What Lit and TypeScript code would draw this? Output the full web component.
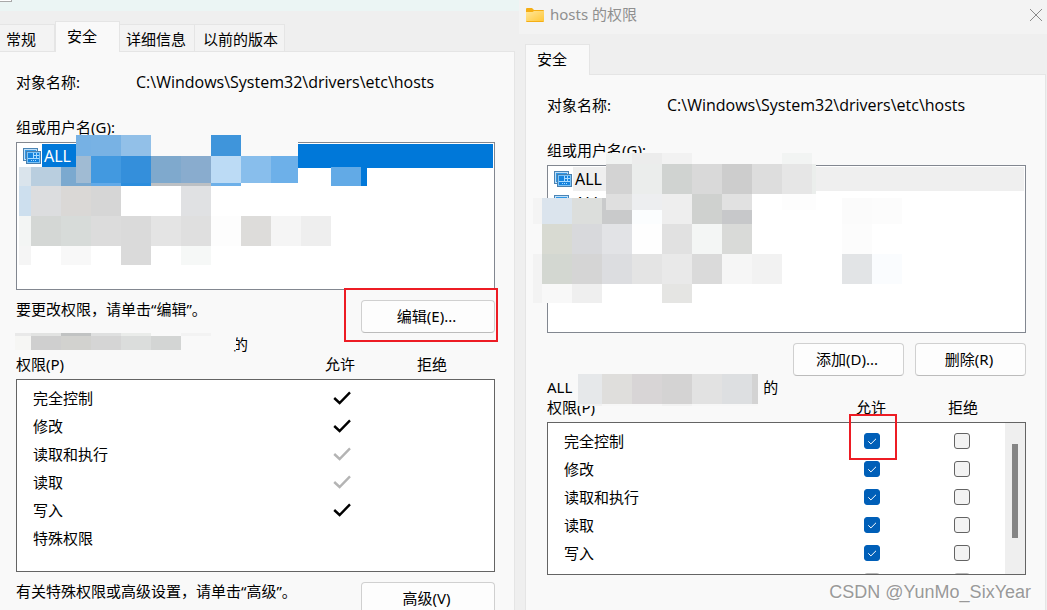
import { LitElement, html, svg, css, nothing } from "lit";
import { customElement, property, state } from "lit/decorators.js";
import { classMap } from "lit/directives/class-map.js";

type Tile = [x: number, y: number, w: number, h: number, fill: string];

/** One band of tiles sharing a top edge: [x, width, colour] triples. */
const band = (y: number, h: number, cells: [number, number, string][]): Tile[] =>
  cells.map(([x, w, c]) => [x, y, w, h, c] as Tile);

const FILE_LIST_TILES: Tile[] = [
  ...band(-7, 21, [[60, 15, "#76b1e4"], [75, 30, "#78b2e4"], [105, 30, "#92c0e8"], [135, 60, "#f9f9f9"], [195, 30, "#3f95db"], [225, 57, "#f9f9f9"]]),
  ...band(25, 19, [[3, 12, "#dae4ec"], [15, 30, "#b9cedf"], [45, 30, "#7ba9cf"], [75, 207, "#ffffff"], [315, 30, "#62aae6"], [345, 6, "#0078d9"]]),
  ...band(14, 27, [[60, 15, "#a0bbd3"], [75, 30, "#4299e0"], [105, 30, "#348fdb"], [135, 30, "#7fa9cd"], [165, 30, "#89acce"], [195, 30, "#bcdbf5"], [225, 30, "#88beec"], [255, 27, "#6db0e9"]]),
  ...band(41, 3, [[75, 30, "#62aae8"], [105, 30, "#2b8ddd"], [135, 60, "#bcc0c4"], [195, 30, "#6db0e9"]]),
  ...band(44, 30, [[3, 12, "#cddfee"], [15, 30, "#dcdddf"], [45, 30, "#dad8d6"], [75, 30, "#d6d6d6"], [165, 30, "#e0e1e3"]]),
  ...band(74, 30, [[3, 12, "#f3f5f4"], [15, 30, "#d4d7d5"], [45, 30, "#d7dbd9"], [75, 30, "#dcdcdc"], [105, 30, "#dadada"], [135, 30, "#e4e4e4"], [165, 30, "#dfdfdf"], [195, 30, "#fdfdfd"], [225, 30, "#dddcda"], [255, 30, "#f5f5f5"], [285, 30, "#eeeeee"]]),
  ...band(104, 19, [[3, 12, "#f5f5f5"], [45, 30, "#f8f8f8"], [105, 30, "#dadada"], [165, 30, "#f6f8f7"]]),
];

const FILE_NAME_TILES: Tile[] = [
  ...band(-2, 3, [[-1, 16, "#e9e9e9"], [15, 30, "#e2e3e2"], [45, 30, "#c1c3c3"], [75, 30, "#dfe0e0"], [105, 30, "#eaecea"], [165, 30, "#f3f3f3"]]),
  ...band(1, 14, [[-1, 16, "#f6f6f4"], [15, 30, "#cfcfcf"], [45, 30, "#d2d2cf"], [75, 30, "#d5d5d5"], [105, 30, "#dbdddc"], [135, 30, "#d3d5d4"], [215, 5, "#f9f9f9"]]),
];

const EDIT_LIST_TILES: Tile[] = [
  ...band(-12, 11, [[59, 26, "#f1f3f2"], [85, 30, "#ececec"], [115, 30, "#f2f2f2"], [145, 90, "#f9f9f9"], [235, 30, "#f2f4f3"]]),
  ...band(33, 26, [[-14, 9, "#f4f4f4"], [-5, 30, "#dbe4ed"], [25, 30, "#dcdedc"], [55, 30, "#c9cacb"], [85, 30, "#fbfdfe"], [115, 30, "#eeeeee"], [145, 30, "#cfd1cf"], [175, 30, "#c7c8ca"], [295, 30, "#fbfbfb"], [325, 30, "#fcfcfc"]]),
  ...band(29, 16, [[59, 26, "#dfdfdf"], [85, 30, "#edeef0"], [115, 30, "#eeeeee"], [145, 30, "#cfd1cf"], [175, 30, "#e1e1e1"], [205, 30, "#ffffff"], [235, 34, "#fdfdfd"]]),
  ...band(-1, 30, [[59, 26, "#d3d3d3"], [85, 30, "#ebedec"], [115, 30, "#d0d3d1"], [145, 30, "#d9d9d9"], [175, 30, "#cdcdcd"], [205, 30, "#dddddd"], [235, 30, "#e6e6e6"], [265, 4, "#ebeeec"]]),
  ...band(59, 30, [[-14, 9, "#f9f9f9"], [-5, 30, "#d8dad2"], [25, 30, "#d8d9dc"], [55, 30, "#e2e3e6"], [85, 30, "#fefefe"], [115, 30, "#e1e1e1"], [145, 30, "#f4f6f5"], [175, 30, "#d9dad8"], [295, 30, "#fcfcfc"]]),
  ...band(89, 30, [[-14, 9, "#f3f3f3"], [-5, 30, "#d3d7d1"], [25, 30, "#d5d5d5"], [55, 30, "#dcdde0"], [85, 30, "#e4e4e4"], [115, 30, "#e9e9e9"], [145, 30, "#dadada"], [175, 30, "#f6f6f6"], [205, 30, "#f2f2f2"], [295, 30, "#e2e4e6"], [325, 30, "#fafcfe"]]),
  ...band(119, 19, [[-14, 9, "#f3f3f3"], [-5, 30, "#f8f8f8"], [25, 30, "#efefef"], [55, 30, "#ffffff"], [115, 30, "#e5e5e3"]]),
];

const EDIT_NAME_TILES: Tile[] = [
  ...band(-4, 30, [[31, 24, "#e6e8ea"], [55, 30, "#dfdedc"], [85, 30, "#d8d5d6"], [115, 30, "#d4d3d3"], [145, 30, "#e2e2e2"], [175, 30, "#dddfe1"], [205, 6, "#d3d3d3"]]),
  ...band(26, 2, [[31, 24, "#f1f1f1"], [55, 60, "#f7f7f7"], [115, 30, "#f2f2f2"], [145, 66, "#f7f7f7"]]),
];

/** Redaction tiles laid over whatever block holds this element. */
@customElement("pixel-mosaic")
export class PixelMosaic extends LitElement {
  @property({ attribute: false }) tiles: Tile[] = [];

  static styles = css`
    :host { position: absolute; left: 0; top: 0; z-index: 2; pointer-events: none; }
    .tiles { display: block; width: 1px; height: 1px; overflow: visible; }
  `;

  render() {
    return html`<svg class="tiles" shape-rendering="crispEdges" aria-hidden="true">
      ${this.tiles.map(([x, y, w, h, c]) => svg`<rect x=${x} y=${y} width=${w} height=${h} fill=${c}></rect>`)}
    </svg>`;
  }
}

interface Permission {
  name: string;
  allow: "yes" | "inherited" | "no";
}

const EFFECTIVE: Permission[] = [
  { name: "完全控制", allow: "yes" },
  { name: "修改", allow: "yes" },
  { name: "读取和执行", allow: "inherited" },
  { name: "读取", allow: "inherited" },
  { name: "写入", allow: "yes" },
  { name: "特殊权限", allow: "no" },
];

const EDITABLE: Permission[] = [
  { name: "完全控制", allow: "yes" },
  { name: "修改", allow: "yes" },
  { name: "读取和执行", allow: "yes" },
  { name: "读取", allow: "yes" },
  { name: "写入", allow: "yes" },
  { name: "", allow: "no" },
];

/** Permission grid; ticks are plain marks, or check boxes when editable. */
@customElement("permission-table")
export class PermissionTable extends LitElement {
  @property({ type: Boolean }) editable = false;
  @property({ attribute: false }) rows: Permission[] = [];

  static styles = css`
    :host { display: block; position: relative; }
    table, thead, tbody { display: block; }
    tr { display: grid; }
    th, td { padding: 0; font-weight: 400; text-align: left; }
    thead tr { grid-template-columns: 1fr 92px 92px; padding-right: 17px; }
    thead th + th { text-align: center; }
    tbody {
      box-sizing: border-box; margin-top: 6px; height: 193px; padding: 4px 0;
      border: 1px solid #646464; background: #fff; overflow: hidden;
    }
    .editable tbody { height: 153px; }
    tbody tr { grid-template-columns: 1fr 90px 90px; padding: 0 18px 0 16px; height: 28px; align-items: center; }
    .mark { display: grid; place-items: center; }
    .mark > * { grid-area: 1 / 1; }
    .tick { width: 18px; height: 14px; padding-left: 2px; fill: none; stroke: #000; stroke-width: 2.4; }
    .tick.inherited { stroke: #b4b4b4; }
    input {
      appearance: none; box-sizing: border-box; width: 16px; height: 16px; margin: 0;
      border: 1px solid #636363; border-radius: 3px; background: #f3f3f3;
    }
    input:checked { border-color: #005fb8; background: #005fb8; }
    input:disabled { border-color: #b9b9b9; background: #f3f3f3; }
    .check { width: 16px; height: 16px; fill: none; stroke: #fff; stroke-width: 1; pointer-events: none; visibility: hidden; }
    input:checked + .check { visibility: visible; }
    .scrollbar { position: absolute; right: 1px; top: 25px; bottom: 1px; width: 20px; background: #efefef; }
    .thumb { position: absolute; left: 7px; top: 21px; width: 6px; height: 94px; background: #858585; }
    .highlight { position: absolute; right: 129px; top: 16px; width: 48px; height: 46px; box-sizing: border-box; border: 2px solid #ed1c24; pointer-events: none; }
  `;

  private box(name: string, checked: boolean, disabled: boolean) {
    return html`<input type="checkbox" aria-label=${name} .checked=${checked} ?disabled=${disabled} />
      <svg class="check" viewBox="0 0 16 16" aria-hidden="true"><path d="M4.3 8.3 6.9 10.9 12 5.8" /></svg>`;
  }

  private mark(row: Permission) {
    if (row.allow === "no") return nothing;
    return html`<svg class=${classMap({ tick: true, inherited: row.allow === "inherited" })} viewBox="0 0 18 14" role="img" aria-label="允许">
      <path d="M1.2 7 6.6 12 17 1.4" />
    </svg>`;
  }

  render() {
    return html`
      <table class=${classMap({ editable: this.editable })}>
        <thead>
          <tr><th>权限(P)</th><th>允许</th><th>拒绝</th></tr>
        </thead>
        <tbody>
          ${this.rows.map((row) => {
            const off = row.allow === "no";
            return html`<tr>
              <td>${row.name}</td>
              <td class="mark">${this.editable ? this.box(`允许 ${row.name}`, !off, off) : this.mark(row)}</td>
              <td class="mark">${this.editable ? this.box(`拒绝 ${row.name}`, false, off) : nothing}</td>
            </tr>`;
          })}
        </tbody>
      </table>
      ${this.editable
        ? html`<div class="scrollbar"><div class="thumb"></div></div><div class="highlight"></div>`
        : nothing}
    `;
  }
}

@customElement("app-root")
export class AppRoot extends LitElement {
  @state() private tab = "安全";

  static styles = css`
    :host {
      display: grid; grid-template-columns: 519fr 528fr; position: relative;
      height: 100vh; overflow: hidden; background: #efefef; color: #000;
      font: 15px/18px "Noto Sans", "Noto Sans CJK SC", sans-serif;
    }
    .dialog { display: flex; flex-direction: column; min-width: 0; }
    .backdrop { flex: none; height: 11px; background: #ebf5f4; }
    .corner { width: 11px; height: 1px; border: solid #a9a9a9; border-width: 0 1px 1px 0; background: #fff; }
    .titlebar {
      flex: none; display: flex; align-items: center; gap: 6px; height: 34px; box-sizing: border-box;
      padding: 0 4px 4px 7px; background: #f3f3f3; color: #8f8f8f;
    }
    .title { flex: 1; margin: 0; padding-bottom: 2px; font: inherit; }
    .folder { width: 18px; height: 14px; }
    .close { display: flex; padding: 0; border: 0; background: none; }
    .close svg { width: 14px; height: 14px; fill: none; stroke: #8a8a8a; }

    .tabs { flex: none; display: flex; align-items: flex-end; height: 40px; position: relative; z-index: 1; }
    .permissions .tabs { padding-left: 6px; }
    .tab {
      box-sizing: border-box; height: 27px; padding: 2px 8px 0 6px; border: solid #e5e5e5; border-width: 1px 1px 0 0;
      background: #f3f3f3; font: inherit; color: inherit; white-space: nowrap;
    }
    .tab:first-child { padding-right: 18px; }
    .tab:last-child { padding-left: 8px; padding-right: 6px; }
    .tab.selected, .tab.selected:first-child {
      height: 31px; margin-bottom: -1px; padding: 0 22px 2px 11px; border-left-width: 1px; background: #f9f9f9;
    }

    .pane { flex: 1; margin-right: 4px; padding: 21px 19px 0 16px; border: solid #e5e5e5; border-width: 1px 1px 0 0; background: #f9f9f9; }
    .permissions .pane { margin: 0 1px 0 6px; padding-left: 21px; border-left-width: 1px; }
    .object { display: grid; grid-template-columns: 120px 1fr; margin: 0; }
    .object dd { margin: 0; font-family: "Open Sans", sans-serif; font-size: 16px; }
    .caption { margin: 27px 0 6px; }

    .group { position: relative; }
    .list { box-sizing: border-box; height: 148px; margin: 0; padding: 1px; border: 1px solid #828790; background: #fff; list-style: none; }
    .permissions .list { height: 168px; }
    .item { display: flex; align-items: center; height: 24px; padding-left: 5px; gap: 1px; }
    .item svg { flex: none; width: 18px; height: 16px; }
    .item span { flex: 1; padding: 3px 2px; font-size: 16px; }
    .item.active span { background: #0078d9; color: #fff; }
    .item.muted span { background: #efefef; }

    .actions { display: flex; align-items: flex-start; gap: 11px; margin-top: 10px; }
    .actions p { flex: 1; margin: 0; }
    .actions.end { justify-content: flex-end; }
    .anchor { position: relative; display: flex; }
    .highlight { position: absolute; inset: -12px -3px -9px -17px; border: 2px solid #ed1c24; pointer-events: none; }
    .button {
      box-sizing: border-box; width: 134px; height: 33px; padding: 0 3px 2px 0; border: 1px solid #d0d0d0; border-bottom-color: #bcbcbc;
      border-radius: 4px; background: #fdfdfd; font: inherit; color: inherit;
    }
    .permissions .button { width: 111px; }
    .name { position: relative; display: flex; gap: 191px; height: 20px; margin-top: 2px; }
    .name.indented { padding-left: 217px; }

    .watermark { position: absolute; right: 16px; bottom: 6px; margin: 0; font: 18px/24px "Liberation Sans", sans-serif; color: #999; text-shadow: 1px 1px 0 #fff; }
  `;

  private groupIcon() {
    return html`<svg viewBox="0 0 18 16" shape-rendering="crispEdges" aria-hidden="true">
      <path fill="#4b84b4" d="M0 0h15v13H0z" /><path fill="#bfe0fa" d="M1 1h13v11H1z" /><path fill="#2f97e6" d="M2 2h11v9H2z" />
      <path fill="#4b7fac" d="M3 3h15v13H3z" /><path fill="#7cc4f8" d="M4 4h13v11H4z" /><path fill="#1583de" d="M5 5h11v9H5z" />
      <path fill="#a9dbff" d="M10 5h1v5h-1zM13 5h1v5h-1zM10 7h6v1h-6zM5 10h11v1H5zM8 12h1v1H8zM10 12h1v1h-1zM12 12h1v1h-1z" />
    </svg>`;
  }

  private object() {
    return html`<dl class="object"><dt>对象名称:</dt><dd>C:\\Windows\\System32\\drivers\\etc\\hosts</dd></dl>
      <p class="caption">组或用户名(G):</p>`;
  }

  private properties() {
    return html`<section class="dialog properties" aria-label="属性">
      <div class="backdrop"><div class="corner"></div></div>
      <div class="tabs" role="tablist">
        ${["常规", "安全", "详细信息", "以前的版本"].map(
          (t) => html`<button role="tab" class=${classMap({ tab: true, selected: t === this.tab })}
            aria-selected=${t === this.tab} @click=${() => (this.tab = t)}>${t}</button>`,
        )}
      </div>
      <div class="pane">
        ${this.object()}
        <div class="group">
          <ul class="list" role="listbox" aria-label="组或用户名">
            <li class="item active" role="option" aria-selected="true">${this.groupIcon()}<span>ALL</span></li>
          </ul>
          <pixel-mosaic .tiles=${FILE_LIST_TILES}></pixel-mosaic>
        </div>
        <div class="actions">
          <p>要更改权限，请单击“编辑”。</p>
          <div class="anchor"><button class="button">编辑(E)...</button><div class="highlight"></div></div>
        </div>
        <div class="name indented"><span>的</span><pixel-mosaic .tiles=${FILE_NAME_TILES}></pixel-mosaic></div>
        <permission-table .rows=${EFFECTIVE}></permission-table>
        <div class="actions">
          <p>有关特殊权限或高级设置，请单击“高级”。</p>
          <button class="button">高级(V)</button>
        </div>
      </div>
    </section>`;
  }

  private permissions() {
    return html`<section class="dialog permissions" aria-label="hosts 的权限">
      <header class="titlebar">
        <svg class="folder" viewBox="0 0 18 14" aria-hidden="true">
          <defs><linearGradient id="f" x2="1" y2="1"><stop stop-color="#ffe69a" /><stop offset="1" stop-color="#ffc83a" /></linearGradient></defs>
          <path fill="#f5ae14" d="M0 1q0-1 1-1h5l2 2h9q1 0 1 1v10q0 1-1 1H1q-1 0-1-1z" />
          <path fill="url(#f)" d="M0 4h6.500l1.500-1h10v9.500q0 .5-.5.5H.5Q0 13 0 12.500z" />
        </svg>
        <h1 class="title">hosts 的权限</h1>
        <button class="close" aria-label="关闭"><svg viewBox="0 0 14 14"><path d="M1 1 13 13M13 1 1 13" /></svg></button>
      </header>
      <div class="tabs" role="tablist"><button role="tab" aria-selected="true" class="tab selected">安全</button></div>
      <div class="pane">
        ${this.object()}
        <div class="group">
          <ul class="list" role="listbox" aria-label="组或用户名">
            <li class="item muted" role="option" aria-selected="true">${this.groupIcon()}<span>ALL</span></li>
            <li class="item" role="option" aria-selected="false">${this.groupIcon()}<span>ALL</span></li>
          </ul>
          <pixel-mosaic .tiles=${EDIT_LIST_TILES}></pixel-mosaic>
        </div>
        <div class="actions end"><button class="button">添加(D)...</button><button class="button">删除(R)</button></div>
        <div class="name"><span>ALL</span><span>的</span><pixel-mosaic .tiles=${EDIT_NAME_TILES}></pixel-mosaic></div>
        <permission-table editable .rows=${EDITABLE}></permission-table>
      </div>
    </section>`;
  }

  render() {
    return html`${this.properties()}${this.permissions()}<p class="watermark">CSDN @YunMo_SixYear</p>`;
  }
}
